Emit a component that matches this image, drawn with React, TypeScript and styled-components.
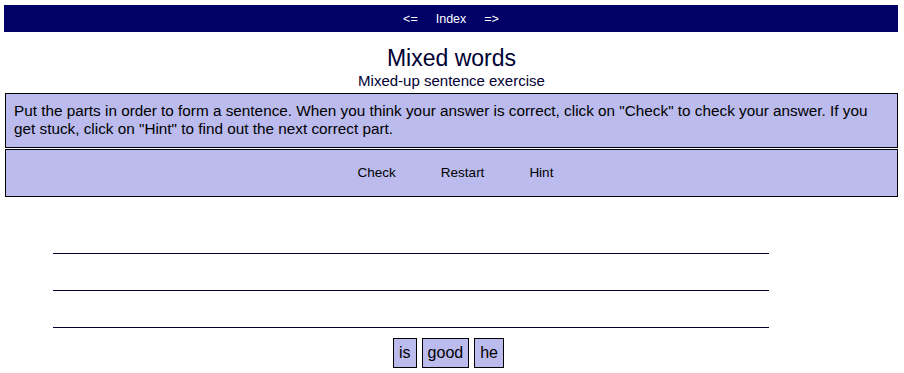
import styled, { createGlobalStyle } from 'styled-components';

const GlobalStyle = createGlobalStyle`
	html, body {
		margin: 0;
		padding: 0;
		background: #ffffff;
	}
	body {
		font-family: "Liberation Sans", Arial, sans-serif;
		color: #000000;
	}
`;

const Page = styled.div`
	padding: 5px 6px 0 5px;
`;

const NavButtonBar = styled.div`
	background-color: #000066;
	height: 27px;
	margin: 0 0 0 -1px;
	display: flex;
	justify-content: center;
	align-items: center;
`;

const NavButton = styled.button`
	border: none;
	background: transparent;
	color: #ffffff;
	font-family: "Liberation Sans", Arial, sans-serif;
	font-size: 12.5px;
	padding: 0 9px;
	cursor: pointer;
`;

const Titles = styled.div`
	text-align: center;
	color: #000033;
	padding: 13px 0 3px;
`;

const ExerciseTitle = styled.h2`
	font-size: 23px;
	font-weight: normal;
	margin: 0;
	line-height: 26px;
`;

const ExerciseSubtitle = styled.h3`
	font-size: 15px;
	font-weight: normal;
	margin: 0;
	line-height: 19px;
`;

const StdDiv = styled.div<{ $align?: string; $height?: number }>`
	background-color: #bbbbee;
	border: 1px solid #000000;
	margin-bottom: 1px;
	padding: 0 8px;
	text-align: ${(p) => p.$align || 'left'};
	height: ${(p) => (p.$height ? `${p.$height}px` : 'auto')};
	box-sizing: border-box;
`;

const Instructions = styled.p`
	margin: 0;
	padding: 8px 0 9px;
	font-size: 15.3px;
	line-height: 18px;
`;

const ButtonRow = styled.div`
	display: flex;
	justify-content: center;
	align-items: center;
	box-sizing: border-box;
	height: 100%;
	gap: 33px;
	padding: 0 0 2px 8px;
`;

const FuncButton = styled.button`
	border: none;
	background: transparent;
	font-family: "Liberation Sans", Arial, sans-serif;
	font-size: 13.5px;
	color: #000000;
	padding: 3px 6px;
	cursor: pointer;
`;

const DropArea = styled.div`
	margin: 20px 0 0 48px;
	width: 716px;
`;

const DropLine = styled.div`
	height: 36px;
	border-bottom: 1px solid #000033;
`;

const CardRow = styled.div`
	display: flex;
	justify-content: center;
	gap: 5px;
	margin: 10px 0 0;
	padding-right: 6px;
`;

const Card = styled.div`
	background-color: #bbbbee;
	border: 1px solid #000000;
	font-size: 16px;
	line-height: 18px;
	padding: 5px 5px;
`;

const words = ['is', 'good', 'he'];

export default function App() {
	return (
		<Page>
			<GlobalStyle />
			<NavButtonBar>
				<NavButton>&lt;=</NavButton>
				<NavButton>Index</NavButton>
				<NavButton>=&gt;</NavButton>
			</NavButtonBar>
			<Titles>
				<ExerciseTitle>Mixed words</ExerciseTitle>
				<ExerciseSubtitle>Mixed-up sentence exercise</ExerciseSubtitle>
			</Titles>
			<StdDiv>
				<Instructions>
					Put the parts in order to form a sentence. When you think your answer is correct, click on "Check" to check
					your answer. If you get stuck, click on "Hint" to find out the next correct part.
				</Instructions>
			</StdDiv>
			<StdDiv $align="center" $height={48}>
				<ButtonRow>
					<FuncButton>Check</FuncButton>
					<FuncButton>Restart</FuncButton>
					<FuncButton>Hint</FuncButton>
				</ButtonRow>
			</StdDiv>
			<DropArea>
				<DropLine />
				<DropLine />
				<DropLine />
			</DropArea>
			<CardRow>
				{words.map((w) => (
					<Card key={w}>{w}</Card>
				))}
			</CardRow>
		</Page>
	);
}
